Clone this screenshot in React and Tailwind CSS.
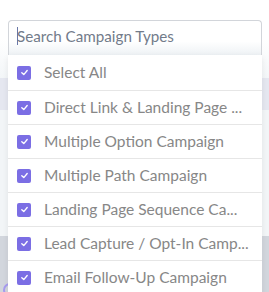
import React from "react";

const items = [
  "Select All",
  "Direct Link & Landing Page ...",
  "Multiple Option Campaign",
  "Multiple Path Campaign",
  "Landing Page Sequence Ca...",
  "Lead Capture / Opt-In Camp...",
  "Email Follow-Up Campaign",
];

function Check() {
  return (
    <span className="flex h-[14px] w-[14px] shrink-0 items-center justify-center rounded-[2px] bg-[#7b6ee4]">
      <svg width="9" height="9" viewBox="0 0 10 10" fill="none">
        <path d="M2 5.3 L4.2 7.3 L8 2.8" stroke="#fff" strokeWidth="1.5" strokeLinecap="round" strokeLinejoin="round" />
      </svg>
    </span>
  );
}

export default function App() {
  return (
    <div
      className="relative h-[292px] w-[269px] overflow-hidden"
      style={{ fontFamily: "Lato, 'Open Sans', sans-serif" }}
    >
      <div className="flex h-full flex-col">
        <div className="h-[78px] bg-gradient-to-b from-white from-50% to-[#f3f6f8]" />
        <div className="h-[32px] bg-[#e5e7f0]" />
        <div className="h-[126px] bg-[#f2f5f7]" />
        <div className="relative flex-1 bg-[#d2d6dd]">
          <span className="absolute left-[3px] top-[47px] h-[14px] w-[14px] rounded-full border-2 border-[#a79cf0]" />
        </div>
      </div>

      <div className="absolute left-[8px] top-[20px] w-[254px]">
        <div className="flex h-[35px] items-start rounded-t-[4px] border border-b-0 border-[#d2d5da] bg-gradient-to-b from-white from-60% to-[#eef2f5] pl-[8px] pt-[4px]">
          <span className="mr-[-1px] mt-[2px] h-[18px] w-px bg-[#6a78a8]" />
          <span className="text-[15.2px] leading-[22px] text-[#727b8a]">Search Campaign Types</span>
        </div>
        <div className="bg-white shadow-[0_2px_6px_rgba(0,0,0,0.08)]">
          {items.map((t, i) => (
            <div
              key={t}
              className={`flex items-center border-b border-[#e6e6e6] pl-[9px] pr-[10px] ${i === 0 ? "h-[36px]" : "h-[34px]"}`}
            >
              <Check />
              <span className="ml-[13px] overflow-hidden whitespace-nowrap text-[15.5px] text-[#878787]">
                {t}
              </span>
            </div>
          ))}
        </div>
      </div>
    </div>
  );
}
